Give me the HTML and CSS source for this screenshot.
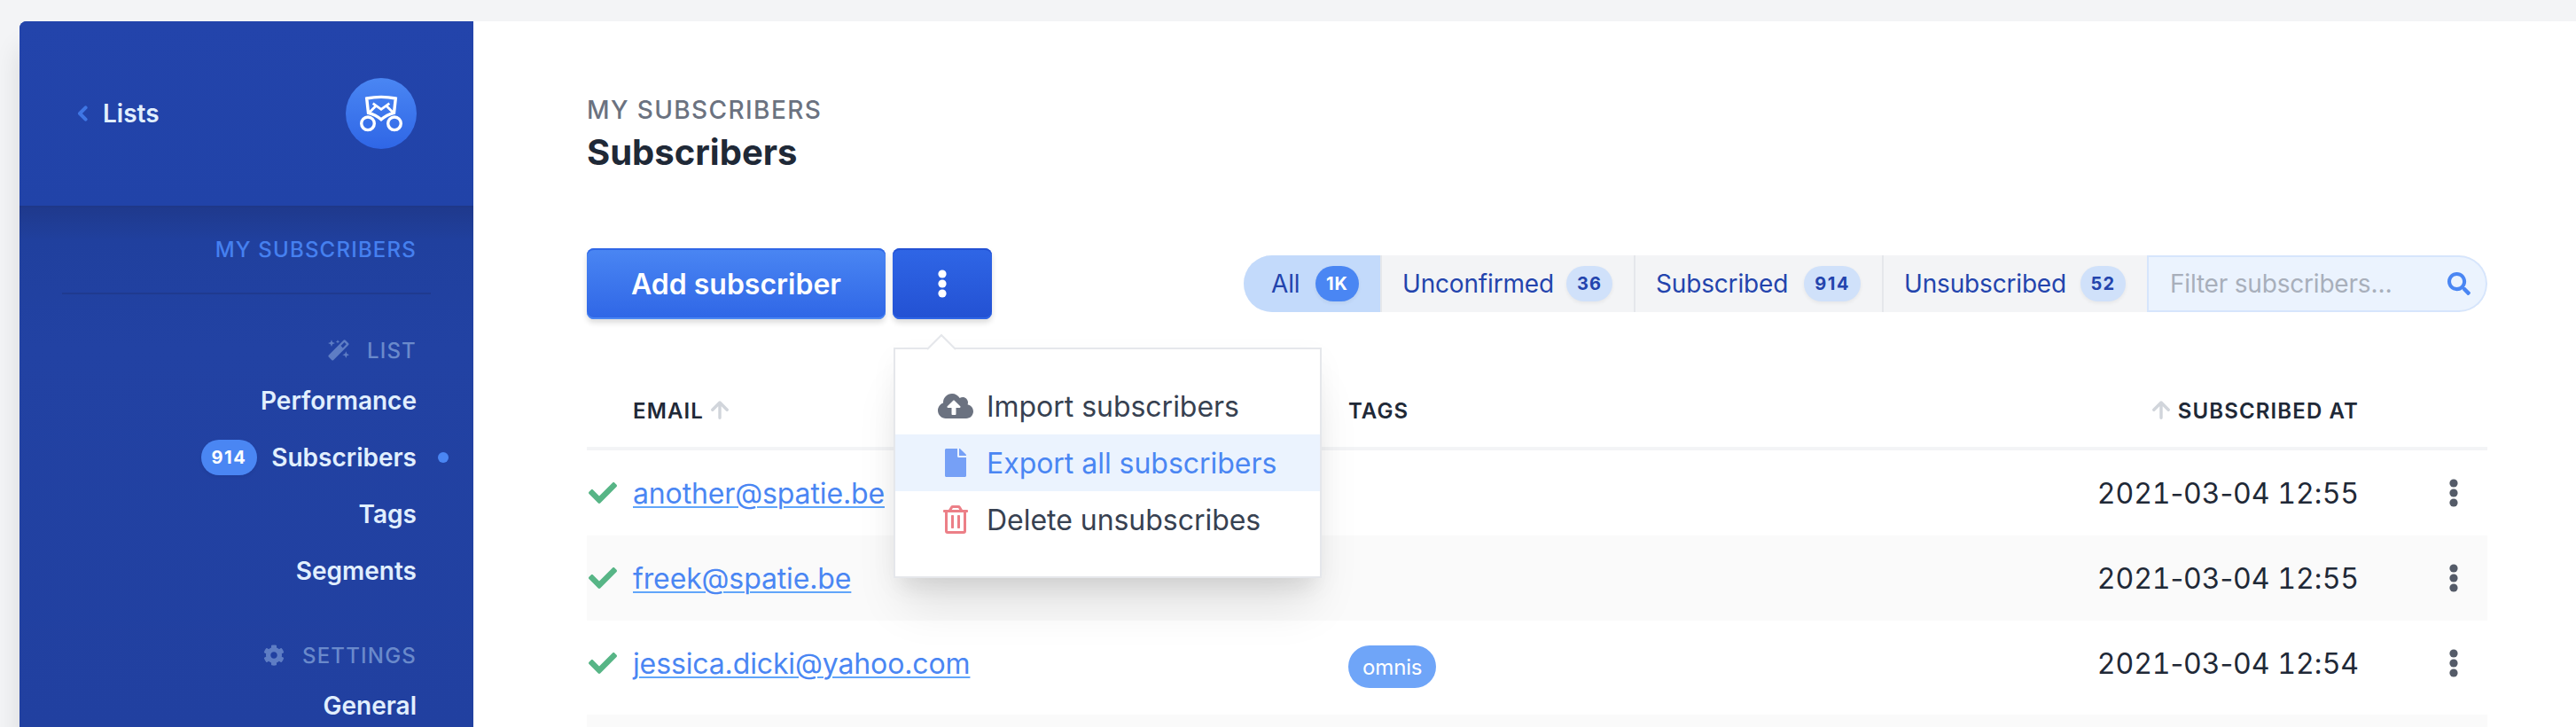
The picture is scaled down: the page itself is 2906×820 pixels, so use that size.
FILE: index.html
```html
<!DOCTYPE html>
<html lang="en">
<head>
<meta charset="utf-8">
<title>Subscribers</title>
<link rel="stylesheet" href="styles.css">
</head>
<body>
<svg class="defs" width="0" height="0">
  <symbol id="dots" viewBox="0 0 10 32"><circle cx="5" cy="5" r="4.6"/><circle cx="5" cy="16" r="4.6"/><circle cx="5" cy="27" r="4.6"/></symbol>
  <symbol id="check" viewBox="0 0 512 512"><path d="M173.898 439.404l-166.4-166.4c-9.997-9.997-9.997-26.206 0-36.204l36.203-36.204c9.997-9.998 26.207-9.998 36.204 0L192 312.69 432.095 72.596c9.997-9.997 26.207-9.997 36.204 0l36.203 36.204c9.997 9.997 9.997 26.206 0 36.204l-294.4 294.401c-9.998 9.997-26.207 9.997-36.204-.001z"/></symbol>
  <symbol id="arrow" viewBox="0 0 20 21"><path d="M10 19.3V2.4M1.8 10.2 10 2l8.2 8.2" fill="none" stroke="currentColor" stroke-width="3.4" stroke-linecap="round" stroke-linejoin="round"/></symbol>
</svg>
<div class="app">
  <aside class="sidebar">
    <header class="brand">
      <a class="back"><svg class="chevron" viewBox="0 0 12 18"><path d="M9.6 2.4 3 9l6.600 6.600" fill="none" stroke="currentColor" stroke-width="4" stroke-linecap="round" stroke-linejoin="round"/></svg>Lists</a>
      <span class="logo"><svg viewBox="16 19 48 42" fill="none" stroke="#fff" stroke-width="3.4"><path d="M23.700 23Q40 19.800 56.300 23L54.500 39.300Q46 41.500 40 46.800 34 41.500 25.500 39.300Z"/><path d="M30.700 28.700 40 35.300l9.300-6.600M26.500 39l8-8M53.500 39l-8-8" stroke-width="2.800"/><circle cx="25" cy="51.300" r="7.300"/><circle cx="55" cy="51.300" r="7.300"/></svg></span>
    </header>
    <nav class="nav">
      <div class="nav-title">My subscribers</div>
      <div class="nav-head list-head"><svg class="nav-icon" viewBox="0 0 24 24"><path fill-rule="evenodd" d="M17.500.8a1.600 1.600 0 0 1 2.200 0l3.300 3.300a1.600 1.600 0 0 1 0 2.200L6.300 23.100a1.600 1.600 0 0 1-2.200 0L.9 19.800a1.600 1.600 0 0 1 0-2.200ZM18.500 3l-4 4.100L16.700 9.400l4-4.200Z"/><path d="M4 .2 5.100 3 8 4.100 5.100 5.200 4 8 2.900 5.200 0 4.100 2.900 3ZM11 .2l.7 1.500 1.500.7-1.500.7L11 4.600l-.7-1.500-1.500-.7 1.500-.7ZM20.300 13.200l1.100 2.900 2.600 1.100-2.600 1.100-1.100 2.800-1.100-2.800-2.900-1.100 2.900-1.100Z"/></svg>List</div>
      <a>Performance</a>
      <a class="active"><b class="badge solid wide">914</b>Subscribers<i class="dot"></i></a>
      <a>Tags</a>
      <a>Segments</a>
      <div class="nav-head settings-head"><svg class="nav-icon" viewBox="0 0 512 512"><path d="M487.400 315.700l-42.600-24.600c4.300-23.200 4.300-47 0-70.200l42.600-24.600c4.900-2.800 7.100-8.600 5.500-14-11.100-35.600-30-67.800-54.700-94.600-3.800-4.100-10-5.100-14.800-2.300L380.800 110c-17.900-15.400-38.500-27.300-60.800-35.100V25.800c0-5.600-3.900-10.500-9.400-11.700-36.700-8.200-74.300-7.800-109.200 0-5.500 1.200-9.400 6.100-9.400 11.700V75c-22.200 7.900-42.800 19.800-60.800 35.100L88.700 85.500c-4.900-2.800-11-1.900-14.800 2.300-24.700 26.700-43.600 58.900-54.700 94.600-1.700 5.400.6 11.200 5.500 14L67.300 221c-4.300 23.200-4.300 47 0 70.200l-42.600 24.600c-4.900 2.800-7.100 8.600-5.500 14 11.100 35.600 30 67.800 54.700 94.600 3.800 4.100 10 5.100 14.800 2.300l42.600-24.600c17.900 15.400 38.500 27.300 60.800 35.100v49.200c0 5.600 3.900 10.500 9.400 11.700 36.700 8.200 74.300 7.800 109.200 0 5.500-1.200 9.400-6.100 9.400-11.700v-49.200c22.200-7.900 42.800-19.800 60.800-35.100l42.600 24.600c4.900 2.800 11 1.900 14.800-2.300 24.700-26.700 43.600-58.900 54.700-94.600 1.500-5.500-.7-11.300-5.600-14.100zM256 336c-44.100 0-80-35.900-80-80s35.900-80 80-80 80 35.900 80 80-35.900 80-80 80z"/></svg>Settings</div>
      <a>General</a>
    </nav>
  </aside>
  <main class="main">
    <div class="crumb">My subscribers</div>
    <h1>Subscribers</h1>
    <div class="actions">
      <button class="btn add">Add subscriber</button>
      <div class="menu-wrap">
        <button class="btn more"><svg class="dots" fill="#fff"><use href="#dots"/></svg></button>
        <div class="menu">
          <svg class="tip" viewBox="0 0 34 20"><path d="M1 18 17 2l16 16v2H1z" fill="#fff"/><path d="M1 18 17 2l16 16" fill="none" stroke="#e5e7eb" stroke-width="2"/></svg>
          <a><span class="ico"><svg width="40" height="32" viewBox="0 0 640 512" fill="#6b7280"><path d="M537.600 226.600c4.100-10.700 6.400-22.400 6.400-34.600 0-53-43-96-96-96-19.700 0-38.100 6-53.300 16.200C367 64.200 315.300 32 256 32c-88.400 0-160 71.600-160 160 0 2.700.1 5.400.2 8.100C40.200 219.800 0 273.200 0 336c0 79.500 64.500 144 144 144h368c70.700 0 128-57.300 128-128 0-61.900-44-113.600-102.400-125.400zM393.400 288H328v112c0 8.800-7.200 16-16 16h-48c-8.800 0-16-7.200-16-16V288h-65.400c-14.300 0-21.400-17.200-11.300-27.300l105.400-105.400c6.200-6.200 16.400-6.200 22.600 0l105.400 105.400c10.100 10.100 2.900 27.300-11.300 27.300z"/></svg></span>Import subscribers</a>
          <a class="hover"><span class="ico"><svg width="24" height="32" viewBox="0 0 384 512" fill="#76a0f6"><path d="M224 136V0H24C10.700 0 0 10.700 0 24v464c0 13.300 10.700 24 24 24h336c13.300 0 24-10.700 24-24V160H248c-13.200 0-24-10.800-24-24zm160-14.100v6.100H256V0h6.100c6.400 0 12.500 2.500 17 7l97.900 98c4.500 4.500 7 10.600 7 16.900z"/></svg></span>Export all subscribers</a>
          <a><span class="ico"><svg width="28" height="32" viewBox="0 0 448 512" fill="#ec7f87"><path d="M268 416h24a12 12 0 0 0 12-12V188a12 12 0 0 0-12-12h-24a12 12 0 0 0-12 12v216a12 12 0 0 0 12 12zM432 80h-82.410l-34-56.700A48 48 0 0 0 274.410 0H173.590a48 48 0 0 0-41.160 23.300L98.410 80H16A16 16 0 0 0 0 96v16a16 16 0 0 0 16 16h16v336a48 48 0 0 0 48 48h288a48 48 0 0 0 48-48V128h16a16 16 0 0 0 16-16V96a16 16 0 0 0-16-16zM171.840 50.910A6 6 0 0 1 177 48h94a6 6 0 0 1 5.150 2.910L293.610 80H154.390zM368 464H80V128h288zm-212-48h24a12 12 0 0 0 12-12V188a12 12 0 0 0-12-12h-24a12 12 0 0 0-12 12v216a12 12 0 0 0 12 12z"/></svg></span>Delete unsubscribes</a>
        </div>
      </div>
      <div class="filters">
        <a class="on">All<b class="badge solid">1K</b></a>
        <a class="unconfirmed">Unconfirmed<b class="badge">36</b></a>
        <a class="subscribed">Subscribed<b class="badge wide">914</b></a>
        <a class="unsubscribed">Unsubscribed<b class="badge">52</b></a>
        <div class="search"><span>Filter subscribers…</span><svg width="26" height="26" viewBox="0 0 512 512" fill="#4a86f3"><path d="M505 442.700L405.300 343c-4.500-4.500-10.600-7-17-7H372c27.600-35.300 44-79.700 44-128C416 93.100 322.900 0 208 0S0 93.100 0 208s93.100 208 208 208c48.300 0 92.700-16.400 128-44v16.300c0 6.400 2.500 12.500 7 17l99.700 99.700c9.400 9.400 24.600 9.400 33.900 0l28.300-28.300c9.400-9.400 9.400-24.600.1-34zM208 336c-70.700 0-128-57.200-128-128 0-70.700 57.200-128 128-128 70.700 0 128 57.200 128 128 0 70.700-57.200 128-128 128z"/></svg></div>
      </div>
    </div>
    <section class="table">
      <div class="row head"><span></span><span>Email<svg class="arrow after"><use href="#arrow"/></svg></span><span>Tags</span><span class="right"><svg class="arrow before"><use href="#arrow"/></svg>Subscribed at</span><span></span></div>
      <div class="row"><svg class="check"><use href="#check"/></svg><span><a>another@spatie.be</a></span><span></span><span class="right date">2021<i>-</i>03<i>-</i>04<i> </i>12<i>:</i>55</span><svg class="dots"><use href="#dots"/></svg></div>
      <div class="row alt"><svg class="check"><use href="#check"/></svg><span><a>freek@spatie.be</a></span><span></span><span class="right date">2021<i>-</i>03<i>-</i>04<i> </i>12<i>:</i>55</span><svg class="dots"><use href="#dots"/></svg></div>
      <div class="row tall"><svg class="check"><use href="#check"/></svg><span><a>jessica.dicki@yahoo.com</a></span><span class="tags"><em>omnis</em></span><span class="right date">2021<i>-</i>03<i>-</i>04<i> </i>12<i>:</i>54</span><svg class="dots"><use href="#dots"/></svg></div>
      <div class="row alt last"></div>
    </section>
  </main>
</div>
</body>
</html>
```
FILE: styles.css
```css
* { box-sizing: border-box; }
body {
  margin: 0;
  height: 820px;
  overflow: hidden;
  background: #f3f4f6;
  font-family: Inter, sans-serif;
  color: #1f2937;
}
.defs { display: block; width: 0; height: 0; }
.app {
  display: flex;
  height: 796px;
  margin: 24px 0 0 22px;
  border-radius: 8px 0 0 0;
  box-shadow: 0 30px 30px rgba(0, 0, 0, .11);
}
.sidebar {
  width: 512px;
  flex: none;
  border-radius: 8px 0 0 0;
  background: #2242a6;
  color: #e1effe;
  overflow: hidden;
}
.brand {
  display: flex;
  align-items: center;
  justify-content: space-between;
  height: 208px;
  padding: 0 64px;
  background: linear-gradient(#2344ab, #2143a8);
}
.back { display: flex; align-items: center; font-size: 28px; font-weight: 600; }
.chevron { width: 12px; height: 18px; margin: 0 17px 0 1px; color: #3f76e4; }
.logo {
  display: flex;
  align-items: center;
  justify-content: center;
  width: 80px;
  height: 80px;
  border-radius: 50%;
  background: linear-gradient(#4a86f3, #2f66e6);
}
.logo svg { width: 48px; height: 42px; }
.nav {
  height: 588px;
  padding: 0 64px;
  text-align: right;
  box-shadow: inset 0 2px 0 #1f3888;
  background: linear-gradient(#1f398c, #20409e 40px, #2242a3 160px, #2140a0);
  font-size: 28px;
  font-weight: 600;
}
.nav-title {
  height: 100px;
  margin: 0 -16px;
  padding: 34px 16px 0;
  border-bottom: 2px solid #1f3a8f;
  color: #4680ef;
  font-size: 24px;
  font-weight: 500;
  line-height: 32px;
  letter-spacing: .05em;
  text-transform: uppercase;
}
.nav-head {
  display: flex;
  align-items: center;
  justify-content: flex-end;
  height: 32px;
  color: #6a8acb;
  font-size: 24px;
  font-weight: 500;
  letter-spacing: .05em;
  text-transform: uppercase;
}
.list-head, .settings-head { margin-top: 47px; margin-bottom: 9px; }
.nav-icon { width: 24px; height: 24px; margin-right: 20px; fill: #5e7dc4; }
.nav a { position: relative; display: flex; align-items: center; justify-content: flex-end; height: 64px; }
.active .badge { margin-right: 16px; }
.dot { position: absolute; right: -36px; top: 26px; width: 12px; height: 12px; border-radius: 50%; background: #4a86f3; }
.badge {
  display: inline-flex;
  align-items: center;
  height: 40px;
  padding: 0 12px;
  border-radius: 20px;
  background: #d0e1fa;
  color: #2344ad;
  font-size: 20px;
  font-weight: 700;
  letter-spacing: .05em;
  box-shadow: 0 2px 4px rgba(0, 0, 0, .06);
}
.badge.solid { background: #4a86f3; color: #fff; }
.badge.wide { letter-spacing: .075em; }
.main { flex: 1; padding: 72px 100px 0 128px; background: #fff; }
.crumb {
  height: 40px;
  color: #6b7280;
  font-size: 28px;
  font-weight: 500;
  line-height: 56px;
  letter-spacing: .05em;
  text-transform: uppercase;
}
h1 { height: 144px; margin: 0; font-size: 40px; font-weight: 700; line-height: 72px; }
.actions { display: flex; align-items: center; height: 80px; }
.btn {
  height: 80px;
  padding: 0;
  border: 0;
  border-radius: 8px;
  color: #fff;
  font: 600 32px Inter, sans-serif;
}
.add {
  width: 337px;
  margin-right: 8px;
  background: linear-gradient(#4a86f3, #2f66e6);
  box-shadow: inset 0 2px #2f66e6, inset 0 -2px #4a86f3, 0 4px 6px rgba(0, 0, 0, .14);
}
.more {
  display: flex;
  align-items: center;
  justify-content: center;
  width: 112px;
  background: linear-gradient(#2f66e6, #2351d3);
  box-shadow: inset 0 2px #2351d3, inset 0 -2px #2f66e6, 0 4px 6px rgba(0, 0, 0, .14);
}
.dots { width: 10px; height: 32px; }
.menu-wrap { position: relative; }
.menu {
  position: absolute;
  z-index: 2;
  left: 1px;
  top: 112px;
  width: 483px;
  height: 260px;
  padding: 32px 0;
  border: 2px solid #e5e7eb;
  background: #fff;
  box-shadow: 0 40px 50px -10px rgba(0, 0, 0, .1), 0 20px 20px -10px rgba(0, 0, 0, .05), 0 10px 30px rgba(0, 0, 0, .04);
}
.tip { position: absolute; left: 35px; top: -18px; width: 34px; height: 20px; }
.menu a {
  display: flex;
  align-items: center;
  height: 64px;
  padding-left: 43px;
  color: #374151;
  font-size: 32px;
  letter-spacing: -.001em;
  white-space: nowrap;
}
.menu .hover { background: #ebf3fe; color: #4a86f3; }
.ico { display: flex; justify-content: center; width: 50px; margin-right: 10px; }
.filters { display: flex; height: 64px; margin-left: auto; border-radius: 32px; overflow: hidden; background: #f3f4f6; }
.filters a {
  display: flex;
  align-items: center;
  justify-content: space-between;
  padding: 0 24px 0 23px;
  border-left: 2px solid #e5e7eb;
  color: #2344ad;
  font-size: 28px;
  letter-spacing: -.006em;
}
.filters .on { width: 154px; padding-left: 31px; border: 0; background: #c3dafb; }
.filters .unconfirmed { width: 286px; }
.filters .subscribed { width: 280px; }
.filters .unsubscribed { width: 299px; }
.search {
  display: flex;
  align-items: center;
  justify-content: space-between;
  width: 384px;
  padding: 0 17px 0 24px;
  border: 2px solid #d6e5fc;
  border-radius: 0 32px 32px 0;
  background: #ebf3fe;
  color: #a8afbb;
  font-size: 28px;
  letter-spacing: -.007em;
}
.table { padding-top: 48px; }
.row {
  display: grid;
  grid-template-columns: 52px 807px 600px 540px 145px;
  align-items: center;
  height: 96px;
  font-size: 32px;
}
.row.alt { background: #fafafa; }
.row.tall { height: 106px; padding-bottom: 10px; }
.row.last { height: 14px; }
.row.head {
  height: 100px;
  padding-top: 15px;
  border-bottom: 4px solid #f3f4f6;
  font-size: 24px;
  font-weight: 600;
  letter-spacing: .047em;
  text-transform: uppercase;
}
.right { text-align: right; }
.arrow { width: 20px; height: 21px; color: #d1d5db; vertical-align: -1px; }
.arrow.after { margin-left: 8px; }
.arrow.before { margin-right: 9px; }
.row a { color: #4a86f3; letter-spacing: -.004em; text-decoration: underline #60a5fa 2px; text-underline-offset: 3px; }
.check { width: 32px; height: 32px; margin-left: 2px; fill: #57b586; }
.date { padding-right: 0; letter-spacing: -.003em; font-variant-numeric: tabular-nums; }
.date i { font-style: normal; font-variant-numeric: normal; }
.row .dots { justify-self: start; margin-left: 102px; fill: #545b68; }
.tags { display: flex; padding-top: 8px; }
.tags em {
  display: inline-flex;
  align-items: center;
  height: 48px;
  padding: 0 16px;
  border-radius: 24px;
  background: #6fa5f8;
  color: #fff;
  font-size: 24px;
  font-style: normal;
  letter-spacing: -.006em;
}
```
